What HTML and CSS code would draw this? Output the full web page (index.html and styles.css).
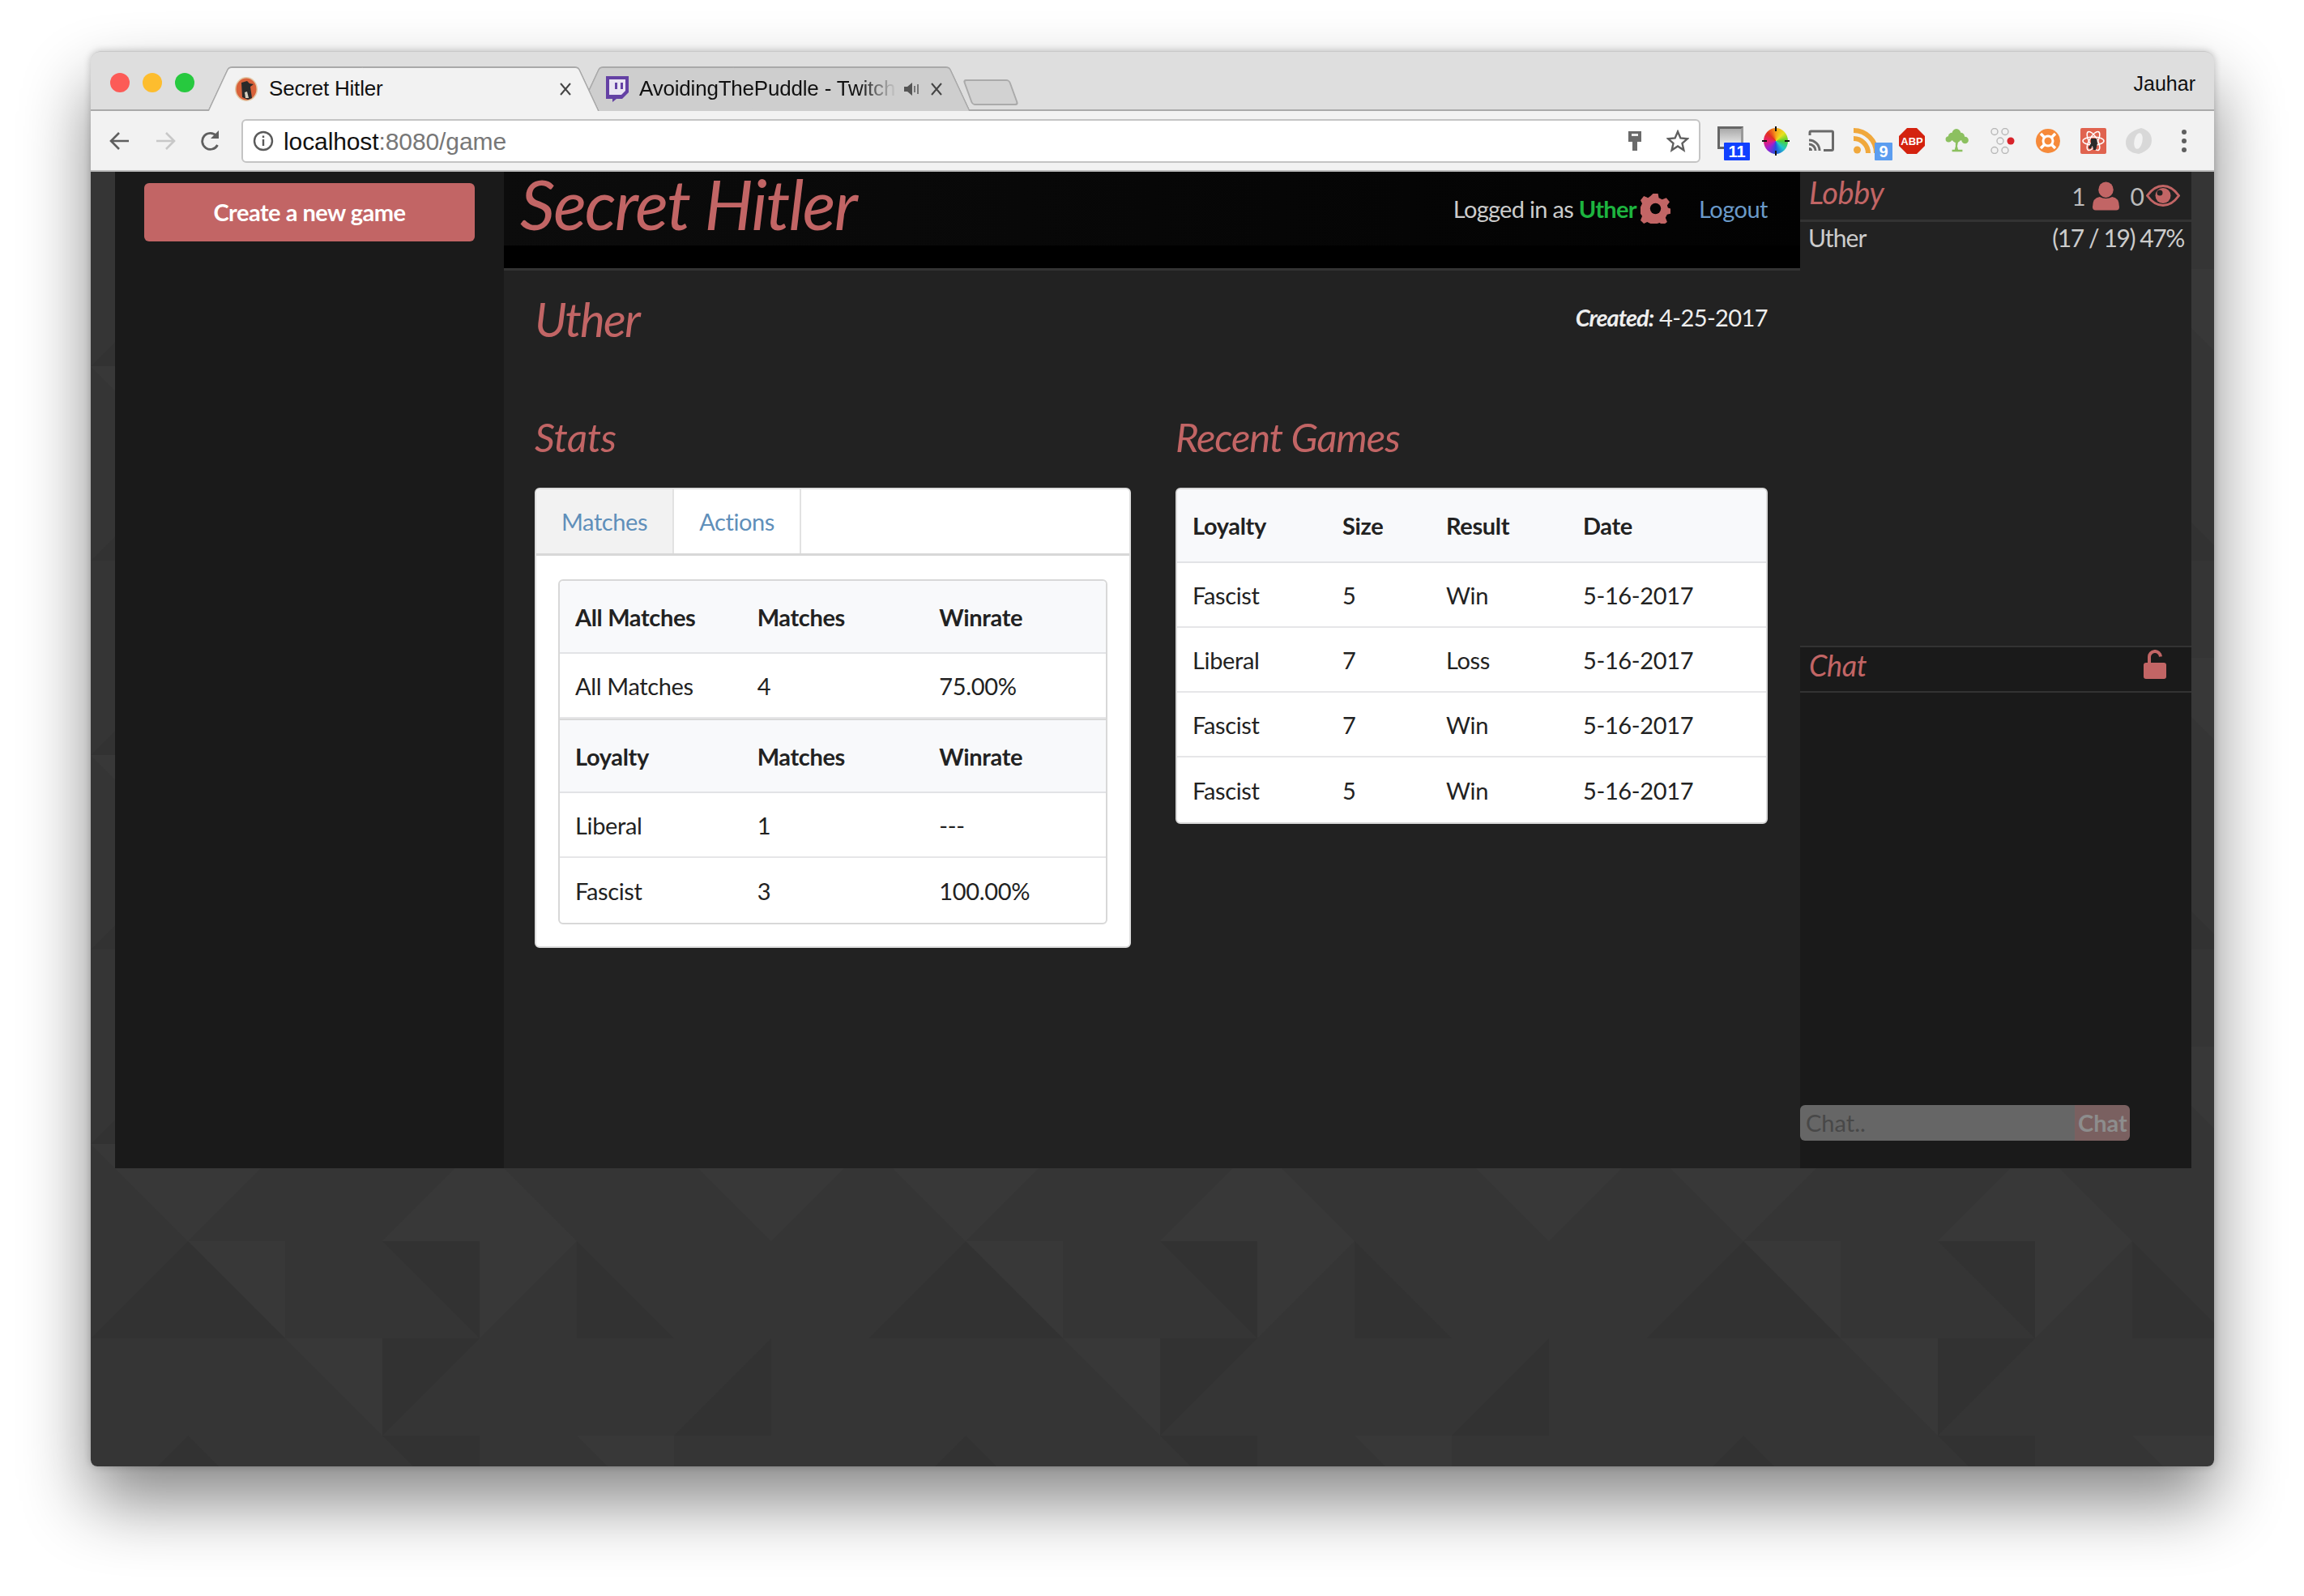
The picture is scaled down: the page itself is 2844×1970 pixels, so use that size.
FILE: index.html
```html
<!DOCTYPE html>
<html lang="en">
<head>
    <meta charset="UTF-8">
    <title>Secret Hitler</title>
    <link rel="stylesheet" href="styles.css">
</head>
<body>
    <div class="window">
        <div class="titlebar">
            <div class="lights">
                <span class="light red"></span>
                <span class="light yellow"></span>
                <span class="light green"></span>
            </div>
            <div class="tab active">
                <svg class="favicon" viewBox="0 0 30 30">
                    <ellipse cx="15" cy="15" rx="14" ry="15" fill="#e2c9a8"/>
                    <ellipse cx="15" cy="15" rx="12.5" ry="13.5" fill="#d9623a"/>
                    <path d="M9 7l7-2 3 3 5 1-4 3 2 14-5 2-7-3z" fill="#2a2a2a"/>
                    <path d="M13 19l3-1 2 8h-4z" fill="#d8d0c0"/>
                </svg>
                <span class="tab-title">Secret Hitler</span>
                <svg class="tab-close" viewBox="0 0 16 16"><path d="M2 1l12 14M14 1L2 15" stroke="#444" stroke-width="2" fill="none"/></svg>
            </div>
            <div class="tab">
                <svg class="favicon" viewBox="0 0 30 32">
                    <path d="M2 0h28v20l-8 8h-7l-5 4v-4H2z" fill="#6441a4"/>
                    <path d="M6 4h20v14l-5 5H6z" fill="#e9e4f2"/>
                    <path d="M13 8h3v8h-3zM20 8h3v8h-3z" fill="#6441a4"/>
                </svg>
                <span class="tab-title fade">AvoidingThePuddle - Twitch</span>
                <svg class="speaker" viewBox="0 0 20 20">
                    <path d="M1 7h4l6-5v16l-6-5H1z" fill="#555"/>
                    <path d="M14 6v8M18 4v12" stroke="#777" stroke-width="2"/>
                </svg>
                <svg class="tab-close" viewBox="0 0 16 16"><path d="M2 1l12 14M14 1L2 15" stroke="#444" stroke-width="2" fill="none"/></svg>
            </div>
            <div class="newtab"></div>
            <div class="profile-name">Jauhar</div>
        </div>

        <div class="toolbar">
            <div class="slot">
                <svg class="nav" viewBox="0 0 28 28"><path d="M25 14H4M13 4L3 14l10 10" fill="none" stroke="#5f5f5f" stroke-width="2.6"/></svg>
            </div>
            <div class="slot">
                <svg class="nav" viewBox="0 0 28 28"><path d="M3 14h21M15 4l10 10-10 10" fill="none" stroke="#c8c8c8" stroke-width="2.6"/></svg>
            </div>
            <div class="slot">
                <svg class="nav" viewBox="0 0 28 28"><path d="M22.5 19A10 10 0 1 1 21 7.5" fill="none" stroke="#5f5f5f" stroke-width="2.8"/><path d="M24 1v10H14z" fill="#5f5f5f"/></svg>
            </div>
            <div class="omnibox">
                <svg class="info" viewBox="0 0 26 26">
                    <circle cx="13" cy="13" r="11" fill="none" stroke="#5a5a5a" stroke-width="2.4"/>
                    <path d="M13 11v8M13 6.500v2.500" stroke="#5a5a5a" stroke-width="2.4"/>
                </svg>
                <span class="url">localhost<span class="url-rest">:8080/game</span></span>
                <svg class="key" viewBox="0 0 18 26"><path d="M1 1h16v13h-5v11H6V14H1z" fill="#6a6a6a"/><path d="M5 4h8v3H5z" fill="#eee"/></svg>
                <svg class="star" viewBox="0 0 28 28"><path d="M14 2.500l3.400 7.900 8.600.8-6.500 5.700 1.900 8.400L14 20.400l-7.400 4.900 1.900-8.400L2 11.200l8.600-.8z" fill="none" stroke="#5f5f5f" stroke-width="2.400"/></svg>
            </div>
            <div class="extensions">
                <div class="slot">
                    <div class="ext-monitor"></div>
                    <span class="badge blue">11</span>
                </div>
                <div class="slot"><div class="ext-wheel"></div></div>
                <div class="slot">
                    <svg class="ext" viewBox="0 0 32 28">
                        <path d="M2 7V3.500Q2 2 3.500 2H29q1.500 0 1.500 1.500V24q0 1.500-1.500 1.500H19" fill="none" stroke="#6a6a6a" stroke-width="3"/>
                        <path d="M1 13a13 13 0 0 1 13 13M1 18a8 8 0 0 1 8 8" fill="none" stroke="#6a6a6a" stroke-width="3"/>
                        <path d="M1 22a4 4 0 0 1 4 4H1z" fill="#6a6a6a"/>
                    </svg>
                </div>
                <div class="slot">
                    <svg class="ext rss" viewBox="0 0 32 32">
                        <path d="M0 3a28 28 0 0 1 28 28M0 13a18 18 0 0 1 18 18" fill="none" stroke="#f0a83c" stroke-width="6"/>
                        <circle cx="4.500" cy="27" r="4.500" fill="#f0a83c"/>
                    </svg>
                    <span class="badge light-blue">9</span>
                </div>
                <div class="slot">
                    <svg class="ext" viewBox="0 0 32 32">
                        <path d="M10 0h12l10 10v12L22 32H10L0 22V10z" fill="#d4220f"/>
                        <text class="abp" x="16" y="21">ABP</text>
                    </svg>
                </div>
                <div class="slot">
                    <svg class="ext" viewBox="0 0 30 28">
                        <g fill="#8cc060">
                            <circle cx="14" cy="5" r="5"/>
                            <circle cx="14" cy="11" r="5"/>
                            <circle cx="9" cy="9" r="4.500"/>
                            <circle cx="19" cy="9" r="4.500"/>
                            <circle cx="24" cy="13" r="4"/>
                            <circle cx="5" cy="12" r="3.500"/>
                            <path d="M13 15h3l-1 5 1 4h-4l1-4zM9 24h12v2.500H9z"/>
                        </g>
                    </svg>
                </div>
                <div class="slot">
                    <svg class="ext" viewBox="0 0 32 32" fill="none" stroke="#b8b8b8" stroke-width="1.400">
                        <circle cx="6" cy="4.500" r="4"/><circle cx="19" cy="4.500" r="4"/>
                        <circle cx="13" cy="16" r="4"/>
                        <circle cx="6" cy="27.500" r="4"/><circle cx="19" cy="27.500" r="4"/>
                        <circle cx="26" cy="16" r="4.500" fill="#d8232a" stroke="none"/>
                    </svg>
                </div>
                <div class="slot">
                    <svg class="ext" viewBox="0 0 32 32">
                        <circle cx="16" cy="16" r="15" fill="#f68a3a"/>
                        <circle cx="16" cy="16" r="6" fill="none" stroke="#fff" stroke-width="3"/>
                        <path d="M7 7l5 5M25 7l-5 5M7 25l5-5M25 25l-5-5" stroke="#fff" stroke-width="3.500"/>
                    </svg>
                </div>
                <div class="slot">
                    <svg class="ext" viewBox="0 0 32 32">
                        <rect width="32" height="32" rx="2" fill="#e0634f"/>
                        <g fill="none" stroke="#fff" stroke-width="1.500">
                            <ellipse cx="16" cy="16" rx="13" ry="5"/>
                            <ellipse cx="16" cy="16" rx="13" ry="5" transform="rotate(60 16 16)"/>
                            <ellipse cx="16" cy="16" rx="13" ry="5" transform="rotate(120 16 16)"/>
                        </g>
                        <path d="M13 13h7l1 6-2 8h-3l-1-5-3 4-2-2 3-5z" fill="#2a2a2a"/>
                    </svg>
                </div>
                <div class="slot">
                    <svg class="ext" viewBox="0 0 32 32">
                        <path d="M19 0q13 4 13 15 0 12-16 17Q0 30 0 18 0 5 19 0z" fill="#d8d8d8"/>
                        <ellipse cx="15.500" cy="16" rx="5" ry="10" fill="#f2f2f2" transform="rotate(12 15.500 16)"/>
                    </svg>
                </div>
                <div class="slot">
                    <div class="menu-dots"><span></span><span></span><span></span></div>
                </div>
            </div>
        </div>

        <div class="wallpaper">
            <div class="sidebar">
                <a class="create-btn">Create a new game</a>
            </div>

            <div class="main">
                <div class="header">
                    <div class="logo">Secret Hitler</div>
                    <div class="userbox">
                        <span class="logged">Logged in as <span class="username">Uther</span></span>
                        <svg class="gear" viewBox="0 0 36 36">
                            <path d="M15 0h6l1 5 4 2 5-2 4 5-3 4 1 3 3 1v6l-4 1-2 4 2 5-5 4-4-3-3 1-1 4h-6l-1-4-4-2-4 2-4-4 2-5-2-3-4-1v-6l4-1 2-4-2-4 4-5 5 2 3-2z" fill="#c26565"/>
                            <circle cx="18" cy="18" r="6.500" fill="#050505"/>
                        </svg>
                        <a class="logout">Logout</a>
                    </div>
                </div>

                <div class="content">
                    <div class="profile-head">
                        <h1 class="player-name">Uther</h1>
                        <div class="created"><em>Created:</em> 4-25-2017</div>
                    </div>

                    <div class="columns">
                        <div class="column">
                            <h2 class="section-title">Stats</h2>
                            <div class="card">
                                <div class="tabs">
                                    <a class="stat-tab selected">Matches</a>
                                    <a class="stat-tab">Actions</a>
                                </div>
                                <div class="card-body">
                                    <table class="table inner">
                                        <thead>
                                            <tr><th>All Matches</th><th>Matches</th><th>Winrate</th></tr>
                                        </thead>
                                        <tbody>
                                            <tr><td>All Matches</td><td>4</td><td>75.00%</td></tr>
                                        </tbody>
                                        <thead class="second">
                                            <tr><th>Loyalty</th><th>Matches</th><th>Winrate</th></tr>
                                        </thead>
                                        <tbody>
                                            <tr><td>Liberal</td><td>1</td><td>---</td></tr>
                                            <tr><td>Fascist</td><td>3</td><td>100.00%</td></tr>
                                        </tbody>
                                    </table>
                                </div>
                            </div>
                        </div>

                        <div class="column">
                            <h2 class="section-title recent">Recent Games</h2>
                            <table class="table games">
                                <thead>
                                    <tr><th>Loyalty</th><th>Size</th><th>Result</th><th>Date</th></tr>
                                </thead>
                                <tbody>
                                    <tr><td>Fascist</td><td>5</td><td>Win</td><td>5-16-2017</td></tr>
                                    <tr><td>Liberal</td><td>7</td><td>Loss</td><td>5-16-2017</td></tr>
                                    <tr><td>Fascist</td><td>7</td><td>Win</td><td>5-16-2017</td></tr>
                                    <tr><td>Fascist</td><td>5</td><td>Win</td><td>5-16-2017</td></tr>
                                </tbody>
                            </table>
                        </div>
                    </div>
                </div>
            </div>

            <div class="rightbar">
                <div class="lobby">
                    <div class="lobby-head">
                        <span class="panel-title">Lobby</span>
                        <div class="counts">
                            <span>1</span>
                            <svg class="person" viewBox="0 0 34 36">
                                <ellipse cx="17" cy="10" rx="9.500" ry="10" fill="#c26565"/>
                                <path d="M0 32q0-12 9-13 8 4 16 0 9 1 9 13 0 4-4 4H4q-4 0-4-4z" fill="#c26565"/>
                            </svg>
                            <span class="zero">0</span>
                            <svg class="eye" viewBox="0 0 42 27">
                                <path d="M1.500 13.500Q10 1.500 21 1.500t19.500 12Q32 25.500 21 25.500T1.500 13.500z" fill="none" stroke="#c26565" stroke-width="3"/>
                                <circle cx="21" cy="13.500" r="9.500" fill="#c26565"/>
                                <circle cx="17" cy="10" r="3.500" fill="#222"/>
                            </svg>
                        </div>
                    </div>
                    <div class="player-row">
                        <span>Uther</span>
                        <span class="player-stats">(17 / 19) 47%</span>
                    </div>
                </div>
                <div class="chat">
                    <div class="chat-head">
                        <span class="panel-title small">Chat</span>
                        <svg class="lock" viewBox="0 0 28 36">
                            <path d="M7 17V9.500a7 7 0 0 1 14-1" fill="none" stroke="#c26565" stroke-width="4"/>
                            <rect y="16" width="28" height="20" rx="3" fill="#c26565"/>
                        </svg>
                    </div>
                    <div class="chat-log"></div>
                    <div class="chat-form">
                        <span class="chat-input">Chat..</span>
                        <span class="chat-send">Chat</span>
                    </div>
                </div>
            </div>
        </div>
    </div>
</body>
</html>
```

FILE: styles.css
```css
* {
    box-sizing: border-box;
}
html, body {
    margin: 0;
    padding: 0;
}
body {
    width: 2844px;
    height: 1970px;
    padding: 63px 111px 0 112px;
    background: #fff;
    font-family: "Lato", "Liberation Sans", sans-serif;
    overflow: hidden;
}
.window {
    width: 2621px;
    height: 1747px;
    display: flex;
    flex-direction: column;
    border-radius: 12px 12px 8px 8px;
    box-shadow: 0 44px 84px rgba(0,0,0,0.47), 0 0 10px rgba(0,0,0,0.22);
}

/* chrome */
.titlebar {
    height: 74px;
    flex: none;
    display: flex;
    background: #dedede;
    border-radius: 12px 12px 0 0;
    border-top: 1px solid #c8c8c8;
    border-bottom: 2px solid #a9a9a9;
    font-family: "Liberation Sans", sans-serif;
}
.lights {
    display: flex;
    gap: 16px;
    padding: 26px 16px 0 24px;
}
.light {
    width: 24px;
    height: 24px;
    border-radius: 50%;
}
.light.red { background: #fc5b57; }
.light.yellow { background: #fdbd2e; }
.light.green { background: #27c93f; }

.tab {
    position: relative;
    isolation: isolate;
    width: 484px;
    height: 55px;
    margin-top: 18px;
    margin-bottom: -2px;
    padding: 0 34px 0 33px;
    display: flex;
    align-items: center;
    font-size: 26px;
    letter-spacing: -0.2px;
    color: #111;
}
.tab + .tab {
    margin-left: -26px;
    padding-left: 32px;
}
.tab.active {
    z-index: 2;
}
.tab::before,
.tab::after {
    content: "";
    position: absolute;
    z-index: -1;
    top: 0;
    bottom: 0;
    width: 55%;
    background: #cecece;
    border-top: 2px solid #a9a9a9;
}
.tab::before {
    left: 0;
    border-left: 2px solid #a9a9a9;
    border-radius: 5px 0 0 0;
    transform-origin: bottom left;
    transform: skewX(-25deg);
}
.tab::after {
    right: 0;
    border-right: 2px solid #a9a9a9;
    border-radius: 0 5px 0 0;
    transform-origin: bottom right;
    transform: skewX(25deg);
}
.tab.active::before,
.tab.active::after {
    background: #f2f2f2;
}
.favicon {
    width: 30px;
    height: 32px;
    flex: none;
    margin-right: 13px;
}
.tab-title {
    flex: 1;
    white-space: nowrap;
    overflow: hidden;
}
.tab-title.fade {
    -webkit-mask-image: linear-gradient(to right, #000 85%, transparent 100%);
    mask-image: linear-gradient(to right, #000 85%, transparent 100%);
}
.tab-close {
    width: 16px;
    height: 16px;
    flex: none;
    margin-left: 10px;
}
.speaker {
    width: 20px;
    height: 20px;
    flex: none;
    margin-left: 8px;
    margin-right: 3px;
}
.newtab {
    width: 58px;
    height: 32px;
    margin: 34px 0 0 -4px;
    background: #d2d2d2;
    border: 2px solid #aaa;
    border-radius: 4px;
    transform: skewX(20deg);
}
.profile-name {
    margin-left: auto;
    padding: 25px 23px 0 0;
    font-size: 25px;
    color: #111;
}

.toolbar {
    height: 75px;
    flex: none;
    display: flex;
    align-items: center;
    padding: 0 9px 0 8px;
    background: #f2f2f2;
    border-bottom: 2px solid #bbb;
}
.slot {
    position: relative;
    width: 56px;
    height: 40px;
    flex: none;
    display: flex;
    align-items: center;
    justify-content: center;
}
.nav {
    width: 28px;
    height: 28px;
}
.omnibox {
    flex: 1;
    height: 54px;
    margin-left: 10px;
    margin-right: 9px;
    padding: 0 12px 0 12px;
    display: flex;
    align-items: center;
    background: #fff;
    border: 2px solid #c4c4c4;
    border-radius: 6px;
    font-family: "Liberation Sans", sans-serif;
}
.info {
    width: 26px;
    height: 26px;
    margin-right: 12px;
}
.url {
    flex: 1;
    padding-top: 2px;
    font-size: 30px;
    letter-spacing: -0.1px;
    color: #111;
}
.url-rest {
    color: #777;
}
.key {
    width: 18px;
    height: 26px;
    margin-right: 30px;
}
.star {
    width: 28px;
    height: 28px;
}
.extensions {
    display: flex;
    align-items: center;
}
.ext {
    width: 32px;
    height: 32px;
}
.abp {
    font-family: "Liberation Sans", sans-serif;
    font-weight: bold;
    font-size: 13px;
    fill: #fff;
    text-anchor: middle;
}
.ext-monitor {
    width: 32px;
    height: 28px;
    margin: -8px 0 0 -1px;
    border: 3px solid #666;
    border-right-color: #999;
    background: linear-gradient(#aaa, #f0f0f0);
}
.badge {
    position: absolute;
    right: 4px;
    bottom: -4px;
    min-width: 32px;
    height: 22px;
    font-family: "Liberation Sans", sans-serif;
    font-weight: bold;
    font-size: 20px;
    line-height: 22px;
    text-align: center;
    color: #fff;
    border-radius: 1px;
}
.badge.blue {
    background: #1040ff;
}
.badge.light-blue {
    right: -4px;
    min-width: 22px;
    background: #5b9df0;
}
.ext-wheel {
    position: relative;
    width: 30px;
    height: 32px;
    border-radius: 50%;
    background: conic-gradient(#f7a11a, #e8e11f, #4fd030, #22c8c8, #2050e0, #a020d0, #e82070, #e03020, #f7a11a);
}
.ext-wheel::before {
    content: "";
    position: absolute;
    left: 14px;
    top: -2px;
    width: 2px;
    height: 36px;
    background: linear-gradient(#111 6px, transparent 6px, transparent 30px, #111 30px);
}
.ext-wheel::after {
    content: "";
    position: absolute;
    top: 15px;
    left: -2px;
    width: 34px;
    height: 2px;
    background: linear-gradient(to right, #111 6px, transparent 6px, transparent 28px, #111 28px);
}
.menu-dots {
    display: flex;
    flex-direction: column;
    gap: 5px;
}
.menu-dots span {
    width: 6px;
    height: 6px;
    border-radius: 50%;
    background: #5f5f5f;
}

/* page */
.wallpaper {
    flex: 1;
    display: flex;
    align-items: flex-start;
    padding: 0 28px 0 30px;
    border-radius: 0 0 8px 8px;
    background-color: #353535;
    background-image: url("data:image/svg+xml,%3Csvg xmlns='http://www.w3.org/2000/svg' width='960' height='480'%3E%3Cg fill='%23383838'%3E%3Cpath d='M0 240h120v120zM120 240h120L120 360zM480 240v120H360zM480 240v120h120zM720 240h120v120zM840 240h120L840 360zM120 360h120v120zM480 360h120L480 480zM240 0h120v120zM600 120h120v120z'/%3E%3C/g%3E%3Cg fill='%23323232'%3E%3Cpath d='M120 360v120H0zM120 360v120h120zM360 360h120v120zM600 360v120h120zM360 0h120L360 120zM360 120h120v120zM120 120v120H0zM120 120v120h120zM840 0v120H720z'/%3E%3C/g%3E%3C/svg%3E");
}
.sidebar {
    width: 480px;
    height: 1230px;
    flex: none;
    padding: 14px 36px;
    background: #1a1a1a;
}
.create-btn {
    height: 72px;
    display: flex;
    align-items: center;
    justify-content: center;
    padding-bottom: 2px;
    background: #c26565;
    border-radius: 6px;
    color: #fff;
    font-weight: 700;
    font-size: 29px;
    letter-spacing: -0.5px;
}
.main {
    width: 1600px;
    height: 1230px;
    flex: none;
    background: #222;
}
.header {
    height: 122px;
    display: flex;
    justify-content: space-between;
    padding: 0 40px 0 20px;
    background: linear-gradient(to right, #0c0c0c, #020202) no-repeat;
    background-size: 100% 91px;
    background-color: #000;
    border-bottom: 3px solid #333;
}
.logo {
    font-style: italic;
    font-size: 85px;
    line-height: 78px;
    letter-spacing: -1.8px;
    color: #c26565;
}
.userbox {
    display: flex;
    align-items: center;
    height: 90px;
    font-size: 29px;
}
.logged {
    color: #ccc;
    letter-spacing: -0.7px;
}
.username {
    color: #1db43f;
    font-weight: 700;
}
.gear {
    width: 37px;
    height: 37px;
    margin: 0 35px 0 5px;
}
.logout {
    color: #6a9ac9;
    letter-spacing: -0.5px;
}
.content {
    padding: 0 40px 0 38px;
}
.profile-head {
    height: 123px;
    display: flex;
    justify-content: space-between;
    padding-top: 24px;
}
.player-name {
    margin: 0;
    font-style: italic;
    font-weight: 400;
    font-size: 58px;
    line-height: 72px;
    letter-spacing: -1.8px;
    color: #c26565;
}
.created {
    margin-top: 12px;
    font-size: 29px;
    line-height: 44px;
    letter-spacing: -0.6px;
    color: #eee;
}
.created em {
    font-weight: 700;
    letter-spacing: -1px;
}
.columns {
    display: grid;
    grid-template-columns: 736px 731px;
    column-gap: 55px;
    align-items: start;
}
.section-title {
    margin: 0;
    height: 145px;
    padding-top: 52px;
    font-style: italic;
    font-weight: 400;
    font-size: 49px;
    line-height: 60px;
    letter-spacing: -0.4px;
    color: #c26565;
}
.section-title.recent {
    letter-spacing: -1.1px;
}
.card {
    background: #fff;
    border: 2px solid #ddd;
    border-radius: 6px;
}
.tabs {
    height: 82px;
    display: flex;
    border-bottom: 3px solid #d8d8d8;
}
.stat-tab {
    display: flex;
    align-items: center;
    padding: 0 31px;
    color: #5f8fba;
    font-size: 29px;
    letter-spacing: -0.4px;
    border-right: 2px solid #e2e2e2;
}
.stat-tab.selected {
    background: #f2f2f2;
    border-radius: 5px 0 0 0;
}
.card-body {
    padding: 29px 27px 27px 27px;
}
.table {
    width: 100%;
    table-layout: fixed;
    border-collapse: separate;
    border-spacing: 0;
    background: #fff;
    color: #222;
    font-size: 29px;
    letter-spacing: -0.35px;
    border: 2px solid #d8d8d8;
    border-radius: 6px;
}
.table th {
    height: 90px;
    padding: 0 21px 0 19px;
    text-align: left;
    font-weight: 700;
    background: #f8f9fb;
    border-bottom: 2px solid #e2e3e6;
}
.table thead:first-child tr th:first-child {
    border-radius: 5px 0 0 0;
}
.table thead:first-child tr th:last-child {
    border-radius: 0 5px 0 0;
}
.table td {
    height: 80px;
    padding: 0 21px 0 19px;
    border-bottom: 2px solid #e6e6e8;
}
.table tbody:last-child tr:last-child td {
    border-bottom: none;
}
.inner .second th {
    height: 92px;
    border-top: 2px solid #d8d8d8;
}
.games th {
    height: 91px;
}
.games th:nth-child(1) { width: 185px; }
.games th:nth-child(2) { width: 128px; }
.games th:nth-child(3) { width: 169px; }

/* right panel */
.rightbar {
    width: 483px;
    height: 1230px;
    flex: none;
    display: flex;
    flex-direction: column;
    background: #222;
}
.lobby {
    height: 585px;
    flex: none;
}
.lobby-head {
    height: 62px;
    display: flex;
    align-items: center;
    justify-content: space-between;
    padding: 0 14px 0 11px;
    border-bottom: 3px solid #333;
}
.panel-title {
    margin-top: -10px;
    font-style: italic;
    font-size: 38px;
    letter-spacing: -0.4px;
    color: #c26565;
}
.panel-title.small {
    font-size: 36px;
}
.counts {
    display: flex;
    align-items: center;
    font-size: 30px;
    color: #bbb;
}
.person {
    width: 33px;
    height: 36px;
    margin-left: 8px;
}
.zero {
    margin-left: 14px;
}
.eye {
    width: 42px;
    height: 27px;
    margin-left: 2px;
}
.player-row {
    display: flex;
    justify-content: space-between;
    padding: 1px 9px 0 10px;
    font-size: 30px;
    letter-spacing: -0.9px;
    color: #ccc;
}
.player-stats {
    letter-spacing: -1.4px;
}
.chat {
    flex: 1;
    display: flex;
    flex-direction: column;
    background: #1a1a1a;
}
.chat-head {
    height: 58px;
    flex: none;
    display: flex;
    align-items: center;
    justify-content: space-between;
    padding: 0 31px 0 11px;
    border-top: 2px solid #333;
    border-bottom: 2px solid #333;
}
.lock {
    width: 28px;
    height: 36px;
    margin-top: -12px;
}
.chat-log {
    height: 509px;
    flex: none;
}
.chat-form {
    width: 407px;
    height: 44px;
    flex: none;
    display: flex;
    overflow: hidden;
    border-radius: 6px;
    font-size: 29px;
    line-height: 44px;
}
.chat-input {
    flex: 1;
    padding-left: 7px;
    background: #666;
    color: #484848;
}
.chat-send {
    width: 68px;
    padding-left: 4px;
    background: #7a6060;
    color: #8d8d8d;
    font-weight: 700;
}
```
